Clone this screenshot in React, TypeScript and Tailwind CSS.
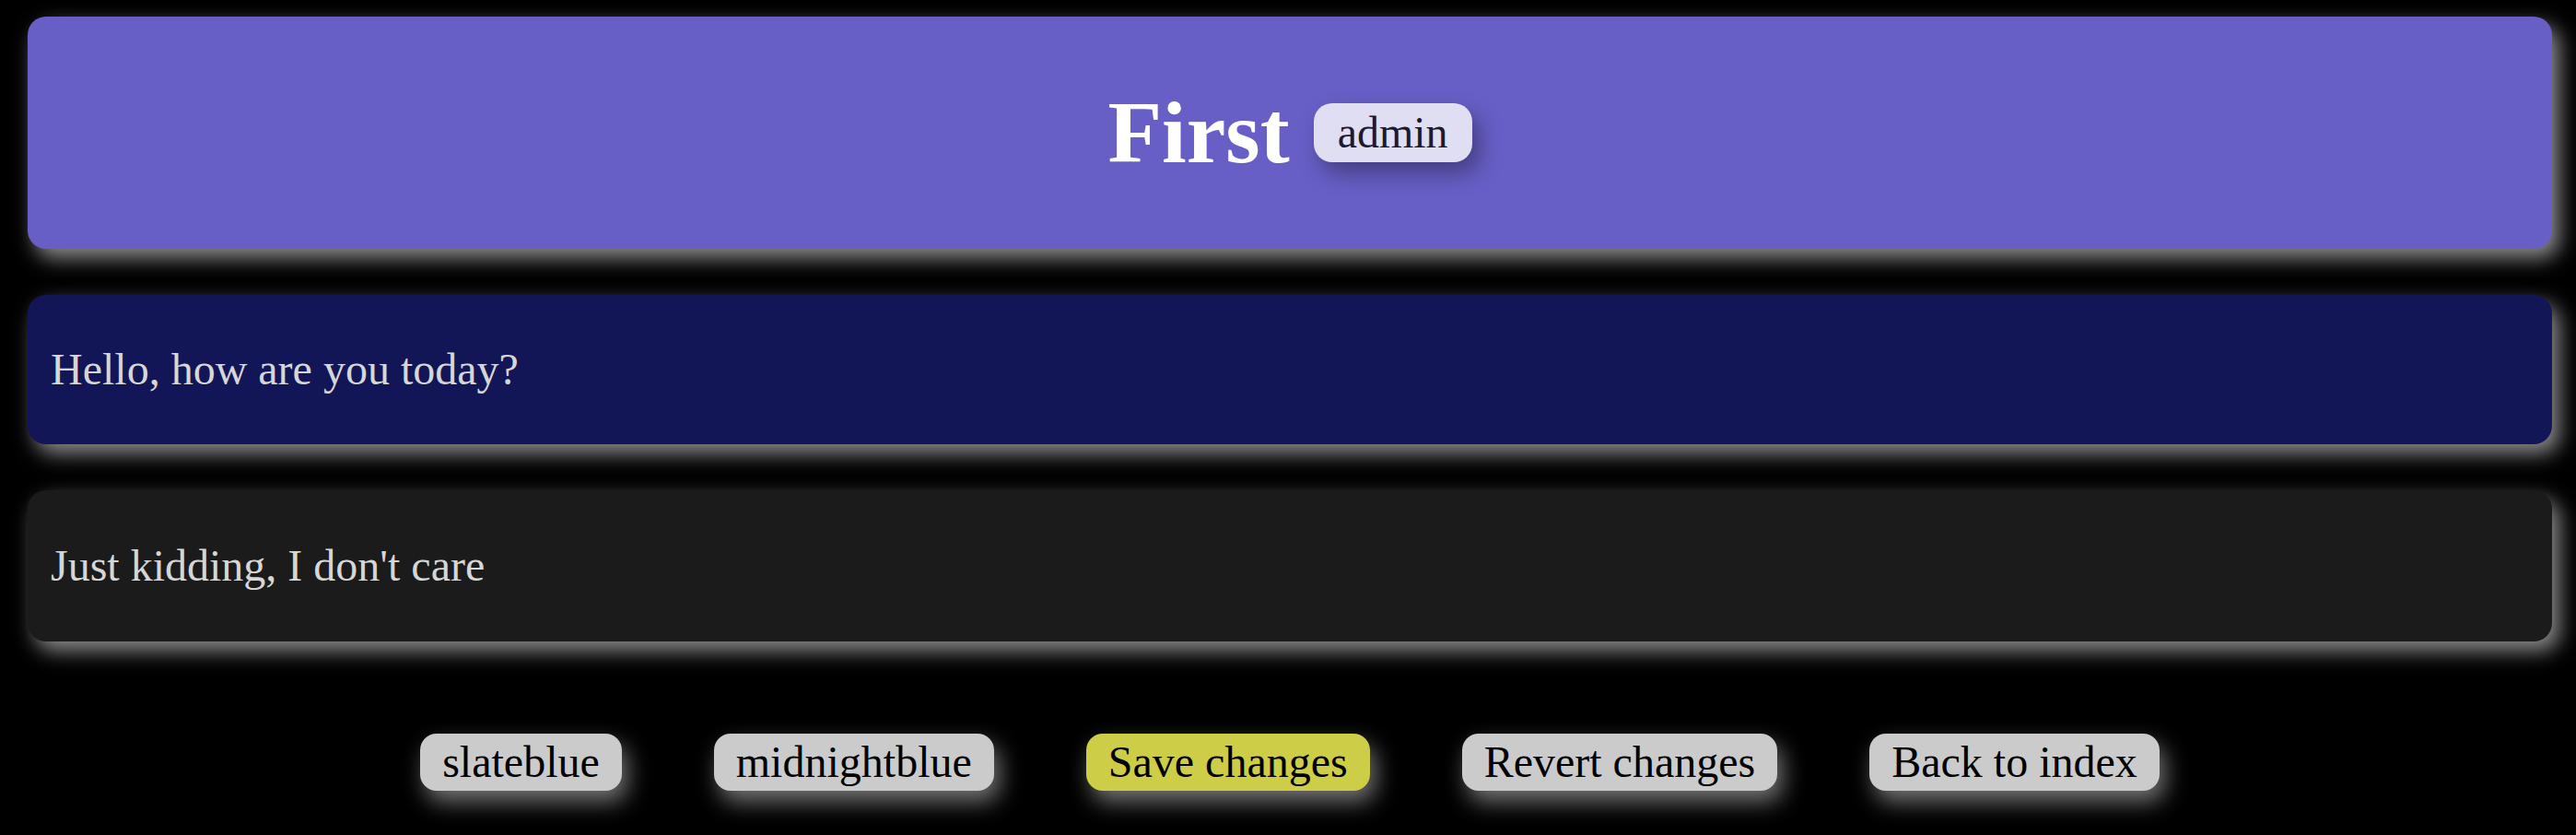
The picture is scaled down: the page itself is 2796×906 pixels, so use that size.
const messages = [
  { text: "Hello, how are you today?", bg: "bg-[#121657]", h: "h-[162px]" },
  { text: "Just kidding, I don't care", bg: "bg-[#1b1b1b]", h: "h-[164px]" },
]

const buttons = [
  { label: "slateblue", bg: "bg-[#cbcbcb]" },
  { label: "midnightblue", bg: "bg-[#cbcbcb]" },
  { label: "Save changes", bg: "bg-[#cdcd48]" },
  { label: "Revert changes", bg: "bg-[#cbcbcb]" },
  { label: "Back to index", bg: "bg-[#cbcbcb]" },
]

export default function App() {
  return (
    <div className="min-h-screen bg-black pl-[30px] pr-[26px] pt-[18px] pb-[48px] font-['Liberation_Serif',serif]">
      <header className="h-[252px] rounded-[20px] bg-[#675fc6] flex items-center justify-center gap-[26px] shadow-[8px_10px_22px_rgba(255,255,255,0.55)]">
        <h1 className="text-[96px] font-bold text-white leading-none">First</h1>
        <span className="h-[64px] px-[26px] rounded-[20px] bg-[#e0def2] text-[#1c1a2e] text-[48px] leading-none flex items-center shadow-[8px_12px_24px_rgba(0,0,0,0.35)]">
          admin
        </span>
      </header>

      <div className="mt-[50px] flex flex-col gap-[50px]">
        {messages.map((m) => (
          <div
            key={m.text}
            className={`${m.h} ${m.bg} rounded-[20px] pl-[25px] flex items-center text-[48px] text-[#d6d6d6] shadow-[8px_10px_22px_rgba(255,255,255,0.55)]`}
          >
            {m.text}
          </div>
        ))}
      </div>

      <div className="mt-[100px] flex justify-center gap-[100px]">
        {buttons.map((b) => (
          <button
            key={b.label}
            className={`${b.bg} h-[62px] px-6 rounded-[18px] text-[48px] leading-none text-black flex items-center shadow-[6px_12px_24px_rgba(255,255,255,0.45)]`}
          >
            {b.label}
          </button>
        ))}
      </div>
    </div>
  )
}
